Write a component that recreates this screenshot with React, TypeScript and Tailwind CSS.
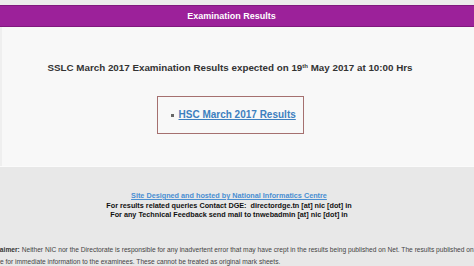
import React from "react";

export default function App() {
  return (
    <div className="w-[474px] h-[266px] overflow-hidden bg-[#e8e8e8] font-['Liberation_Sans',Arial,sans-serif]">
      <div className="h-[5px] bg-[#ececec]" />
      <div className="h-[22px] bg-[#9c219a] border-y border-[#80197e] flex items-center justify-center pr-[11px]">
        <span className="text-white font-bold text-[9px] leading-none">Examination Results</span>
      </div>
      <div className="h-[139px] bg-[#f8f8f8] border-l-2 border-[#efefef] flex flex-col items-center pr-[16px]">
        <p className="mt-[35px] text-[9.8px] leading-[12px] font-bold text-[#333] whitespace-nowrap">
          SSLC March 2017 Examination Results expected on 19<sup className="text-[6px]">th</sup> May 2017 at 10:00 Hrs
        </p>
        <div className="mt-[22px] w-[147px] h-[38px] border border-[#a5706f] flex items-center pl-[13px] gap-[5px]">
          <span className="w-[3px] h-[3px] bg-[#666] mt-[1px]" />
          <a className="text-[10px] font-bold text-[#3d7fbf] underline leading-none">HSC March 2017 Results</a>
        </div>
      </div>
      <div className="h-px bg-[#fbfbfb]" />
      <div className="flex flex-col items-center pt-[24px] pr-[16px] text-[7.25px] leading-[9.6px] font-bold text-[#111] whitespace-nowrap">
        <a className="text-[#4a8fd2] underline">Site Designed and hosted by National Informatics Centre</a>
        <p>For results related queries Contact DGE:&nbsp; directordge.tn [at] nic [dot] in</p>
        <p>For any Technical Feedback send mail to tnwebadmin [at] nic [dot] in</p>
      </div>
      <div className="mt-[24px] text-[6.65px] leading-[12px] text-[#444] whitespace-nowrap">
        <p className="-ml-[16px]">
          <b className="text-[#333]">Disclaimer:</b> Neither NIC nor the Directorate is responsible for any inadvertent error that may have crept in the results being published on Net. The results published on this site
        </p>
        <p className="-ml-[6px]">are for immediate information to the examinees. These cannot be treated as original mark sheets.</p>
      </div>
    </div>
  );
}
